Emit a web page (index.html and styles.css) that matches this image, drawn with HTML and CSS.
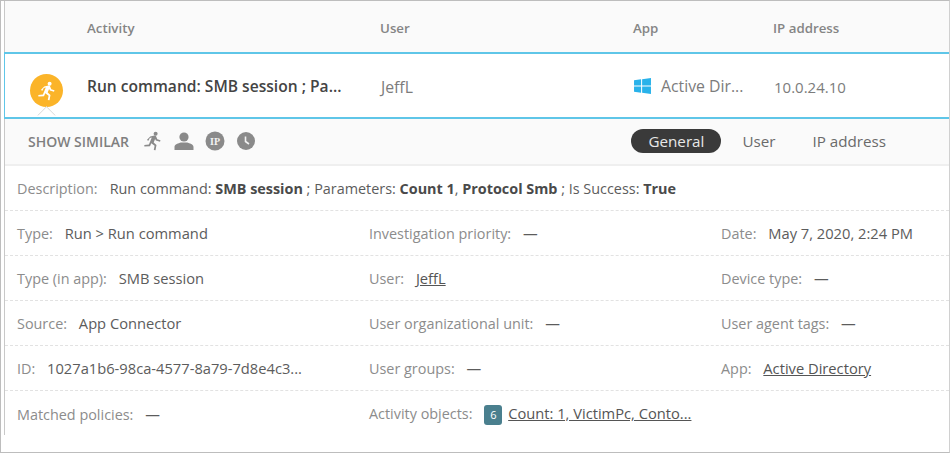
FILE: index.html
```html
<!DOCTYPE html>
<html lang="en">
<head>
    <meta charset="UTF-8">
    <meta name="viewport" content="width=device-width, initial-scale=1.0">
    <title>Activity details</title>
    <link rel="stylesheet" href="styles.css">
</head>
<body>
    <div class="frame">
        <div class="panel">
            <div class="columns head">
                <div></div>
                <div>Activity</div>
                <div>User</div>
                <div>App</div>
                <div>IP address</div>
            </div>

            <div class="columns selected">
                <div class="cell-icon">
                    <span class="run-badge">
                        <svg width="20" height="20" viewBox="0 0 20 20"><use href="#run"/></svg>
                    </span>
                    <span class="caret"></span>
                </div>
                <div class="activity-name">Run command: SMB session ; Pa...</div>
                <div class="cell-user">JeffL</div>
                <div class="cell-app">
                    <svg class="win-logo" width="17" height="16" viewBox="0 0 18 17">
                        <path d="M0 2.5 7.5 1.4V8H0zM8.6 1.2 18 0v8H8.6zM0 9h7.5v6.6L0 14.5zM8.6 9H18v8l-9.4-1.2z"/>
                    </svg>
                    <span>Active Dir...</span>
                </div>
                <div class="cell-ip">10.0.24.10</div>
            </div>

            <div class="toolbar">
                <div class="similar">
                    <span class="similar-label">SHOW SIMILAR</span>
                    <svg class="tool-icon" width="20" height="20" viewBox="0 0 20 20"><use href="#run"/></svg>
                    <svg class="tool-icon" width="20" height="20" viewBox="0 0 20 20">
                        <circle cx="10" cy="6" r="4.6"/>
                        <path d="M0.5 19v-3c0-2.5 4-3.6 6.4-4.4h6.2c2.4.8 6.4 1.9 6.4 4.4v3z"/>
                    </svg>
                    <svg class="tool-icon" width="20" height="20" viewBox="0 0 20 20">
                        <circle cx="10" cy="10" r="9.5"/>
                        <text class="ip-glyph" x="10" y="13.5" text-anchor="middle">IP</text>
                    </svg>
                    <svg class="tool-icon" width="20" height="20" viewBox="0 0 20 20">
                        <circle cx="10" cy="10" r="9"/>
                        <path class="clock-hand" d="M9.5 5.5V10.5L13 13"/>
                    </svg>
                </div>
                <div class="tabs">
                    <span class="tab tab-active">General</span>
                    <span class="tab tab-user">User</span>
                    <span class="tab">IP address</span>
                </div>
            </div>

            <div class="row row-desc">
                <span class="lbl">Description:</span>
                <span>Run command: <b>SMB session</b> ; Parameters: <b>Count 1</b>, <b>Protocol Smb</b> ; Is Success: <b>True</b></span>
            </div>
            <div class="row row-3">
                <div><span class="lbl">Type:</span> <span>Run &gt; Run command</span></div>
                <div><span class="lbl">Investigation priority:</span> <span>—</span></div>
                <div><span class="lbl">Date:</span> <span>May 7, 2020, 2:24 PM</span></div>
            </div>
            <div class="row row-3">
                <div><span class="lbl">Type (in app):</span> <span>SMB session</span></div>
                <div><span class="lbl">User:</span> <a href="#">JeffL</a></div>
                <div><span class="lbl">Device type:</span> <span>—</span></div>
            </div>
            <div class="row row-3">
                <div><span class="lbl">Source:</span> <span>App Connector</span></div>
                <div><span class="lbl">User organizational unit:</span> <span>—</span></div>
                <div><span class="lbl">User agent tags:</span> <span>—</span></div>
            </div>
            <div class="row row-3">
                <div><span class="lbl">ID:</span> <span>1027a1b6-98ca-4577-8a79-7d8e4c3...</span></div>
                <div><span class="lbl">User groups:</span> <span>—</span></div>
                <div><span class="lbl">App:</span> <a href="#">Active Directory</a></div>
            </div>
            <div class="row row-3 row-last">
                <div><span class="lbl">Matched policies:</span> <span>—</span></div>
                <div><span class="lbl">Activity objects:</span> <span class="count">6</span> <a href="#">Count: 1, VictimPc, Conto...</a></div>
                <div></div>
            </div>
        </div>
    </div>

    <svg class="defs" width="0" height="0">
        <symbol id="run" viewBox="0 0 20 20">
            <circle cx="12.6" cy="2.8" r="2"/>
            <path d="M7.2 5.4 11.4 4.6c1 0 1.6.5 1.9 1.2l1 2.5 3.2 1-.5 1.5-4.1-1.3-.8-1.5-1.4 3.6 2.8 2.3-1 5.3-1.7-.3.8-4.2-3.3-2.4-1.3 2.9-5.6.3-.1-1.6 4.6-.3 2.9-7-2 .4-1.4 2.7-1.5-.7z"/>
        </symbol>
    </svg>
</body>
</html>
```

FILE: styles.css
```css
body {
    margin: 0;
    font-family: "Open Sans", Arial, sans-serif;
    font-size: 14.7px;
    color: #5c5c5c;
    background-color: #fff;
}

.frame {
    box-sizing: border-box;
    width: 950px;
    height: 453px;
    border: 1px solid #bdbdbd;
    border-right-color: #d0d0d0;
    padding-left: 3px;
    overflow: hidden;
}

.panel {
    height: 434px;
    border-left: 1px solid #c8c8c8;
}

.columns {
    display: grid;
    grid-template-columns: 82px 293px 253px 140px 1fr;
    align-items: center;
}

.head {
    height: 51px;
    box-sizing: border-box;
    padding-top: 2px;
    background-color: #fafafa;
    color: #858585;
    font-size: 13.3px;
    font-weight: 600;
}

.selected {
    height: 67px;
    box-sizing: border-box;
    border-top: 2px solid #5fc6e8;
    border-bottom: 2px solid #5fc6e8;
    border-left: 1px solid #5fc6e8;
    margin-left: -1px;
    padding-left: 1px;
    background-color: #fff;
}

.cell-icon {
    position: relative;
    height: 100%;
}

.run-badge {
    position: absolute;
    left: 24px;
    top: 20px;
    width: 33px;
    height: 33px;
    border-radius: 50%;
    background-color: #fbb429;
    fill: #fff;
    display: flex;
    justify-content: center;
    align-items: center;
}

.caret {
    position: absolute;
    left: 33px;
    bottom: -6px;
    width: 15px;
    height: 15px;
    box-sizing: border-box;
    background-color: #fff;
    border-top: 1px solid #d2d2d2;
    border-left: 1px solid #d2d2d2;
    transform: rotate(45deg) scale(0.9);
    clip-path: polygon(0 0, 100% 0, 0 100%);
}

.activity-name {
    margin-left: -1px;
    font-size: 15.6px;
    font-weight: 600;
    color: #444;
    white-space: nowrap;
}

.cell-user,
.cell-app,
.cell-ip {
    color: #7c7c7c;
    margin-top: 3px;
}

.cell-user {
    font-size: 15.8px;
}

.cell-ip {
    font-size: 15px;
}

.cell-app {
    display: flex;
    align-items: center;
    gap: 10px;
    font-size: 15.8px;
    margin-top: 1px;
    white-space: nowrap;
}

.win-logo {
    fill: #29b2ea;
    flex-shrink: 0;
}

.toolbar {
    height: 47px;
    box-sizing: border-box;
    background-color: #fafafa;
    border-bottom: 2px solid #efefef;
    display: flex;
    align-items: center;
    justify-content: space-between;
    padding: 0 63px 1px 23px;
}

.similar {
    display: flex;
    align-items: center;
    gap: 11px;
}

.similar-label {
    font-size: 14px;
    font-weight: 600;
    color: #7f7f7f;
    margin-right: 3px;
}

.tool-icon {
    fill: #8a8a8a;
}

.ip-glyph {
    font-family: "Liberation Serif", serif;
    font-size: 10px;
    font-weight: 700;
    fill: #f2f2f2;
}

.clock-hand {
    fill: none;
    stroke: #f2f2f2;
    stroke-width: 1.6;
}

.tabs {
    display: flex;
    align-items: center;
    gap: 37px;
    font-size: 15.2px;
}

.tab {
    color: #6a6a6a;
}

.tab-active {
    padding: 2px 17px;
    border-radius: 13px;
    background-color: #3a3a3a;
    color: #e8e8e8;
}

.tab-user {
    margin-left: -16px;
}

.row {
    height: 45px;
    box-sizing: border-box;
    border-bottom: 1px dashed #e2e2e2;
    padding-left: 12px;
    display: flex;
    align-items: center;
    gap: 4px;
    white-space: nowrap;
}

.row-desc {
    font-size: 14.4px;
}

.row-3 {
    display: grid;
    grid-template-columns: 352px 352px 1fr;
    gap: 0;
}

.row-last {
    border-bottom: none;
}

.lbl {
    color: #8c8c8c;
    font-size: 14.4px;
    margin-right: 8px;
}

.row b {
    font-weight: 700;
    color: #4a4a4a;
}

.row a {
    color: #555;
}

.count {
    display: inline-block;
    width: 18px;
    height: 20px;
    line-height: 20px;
    border-radius: 3px;
    background-color: #4a7f8e;
    color: #fff;
    font-size: 11px;
    text-align: center;
    margin-right: 2px;
}

.defs {
    position: absolute;
}
```
